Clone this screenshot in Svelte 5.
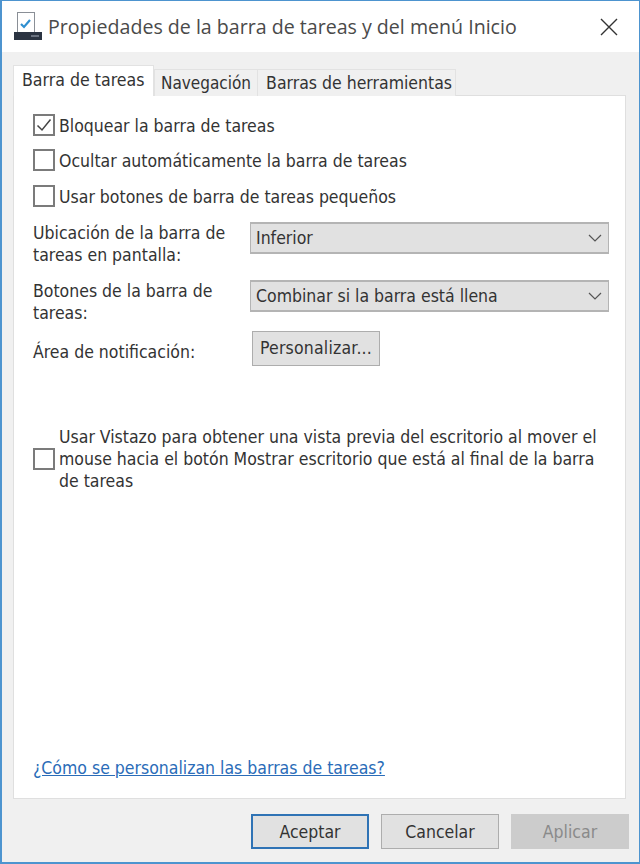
<script>
  const options = [
    { label: 'Bloquear la barra de tareas', checked: true },
    { label: 'Ocultar automáticamente la barra de tareas', checked: false },
    { label: 'Usar botones de barra de tareas pequeños', checked: false }
  ];
  const tabs = ['Navegación', 'Barras de herramientas'];
</script>

<div class="window">
  <header class="titlebar">
    <svg class="appicon" width="29" height="29" viewBox="0 0 29 29" aria-hidden="true">
      <rect x="3.5" y="0.5" width="17" height="21" fill="#fff" stroke="#8a8f96"/>
      <path d="M7 12l3 3 6-7" fill="none" stroke="#2f8fd0" stroke-width="2.2"/>
      <rect x="0" y="20" width="28" height="8" fill="#2b3442"/>
      <rect x="17" y="23" width="8" height="2" fill="#6a7280"/>
    </svg>
    <h1>Propiedades de la barra de tareas y del menú Inicio</h1>
    <svg class="close" width="18" height="18" viewBox="0 0 18 18" aria-hidden="true">
      <path d="M1 1l16 16M17 1L1 17" stroke="#333" stroke-width="1.4" fill="none"/>
    </svg>
  </header>

  <main class="body">
    <div class="tabs">
      <div class="tab active">Barra de tareas</div>
      {#each tabs as t}
        <div class="tab">{t}</div>
      {/each}
    </div>

    <section class="pane">
      <div class="checks">
        {#each options as o}
          <div class="check">
            <span class="box">
              {#if o.checked}
                <svg width="16" height="14" viewBox="0 0 16 14" aria-hidden="true"><path d="M1.5 7.5l4.5 4.5L14.5 1.5" fill="none" stroke="#444" stroke-width="1.5"/></svg>
              {/if}
            </span>
            <span class="text">{o.label}</span>
          </div>
        {/each}
      </div>

      <div class="form">
        <div class="label">Ubicación de la barra de tareas en pantalla:</div>
        <div class="select">
          <span>Inferior</span>
          <svg width="14" height="8" viewBox="0 0 14 8" aria-hidden="true"><path d="M1 1l6 6 6-6" fill="none" stroke="#555" stroke-width="1.2"/></svg>
        </div>
        <div class="label">Botones de la barra de tareas:</div>
        <div class="select">
          <span>Combinar si la barra está llena</span>
          <svg width="14" height="8" viewBox="0 0 14 8" aria-hidden="true"><path d="M1 1l6 6 6-6" fill="none" stroke="#555" stroke-width="1.2"/></svg>
        </div>
        <div class="label single">Área de notificación:</div>
        <div class="custom">Personalizar...</div>
      </div>

      <div class="peek">
        <span class="box"></span>
        <p>Usar Vistazo para obtener una vista previa del escritorio al mover el mouse hacia el botón Mostrar escritorio que está al final de la barra de tareas</p>
      </div>

      <a class="link" href="#help">¿Cómo se personalizan las barras de tareas?</a>
    </section>

    <footer class="actions">
      <button class="btn default">Aceptar</button>
      <button class="btn">Cancelar</button>
      <button class="btn disabled">Aplicar</button>
    </footer>
  </main>
</div>

<style>
  :global(body) { margin: 0; background: #f0f0f0; }
  .window {
    width: 640px;
    height: 864px;
    box-sizing: border-box;
    border: 2px solid #4d94cf;
    border-top-width: 1px;
    border-right-width: 1px;
    display: flex;
    flex-direction: column;
    font-family: "DejaVu Sans Condensed", "DejaVu Sans", sans-serif;
    font-size: 17.5px;
    color: #333;
  }
  .titlebar {
    height: 51px;
    flex: none;
    background: #fff;
    display: flex;
    align-items: center;
    padding: 0 21px 0 12px;
    box-sizing: border-box;
  }
  .appicon { flex: none; margin-right: 5px; margin-top: -1px; }
  h1 {
    margin: 0;
    flex: 1;
    font: 400 19.6px "Open Sans", "Noto Sans", sans-serif;
    color: #4a4a4a;
    white-space: nowrap;
  }
  .close { flex: none; }
  .body {
    flex: 1;
    background: #f0f0f0;
    display: flex;
    flex-direction: column;
    padding: 13px 13px 13px 11px;
    min-height: 0;
  }
  .tabs { display: flex; align-items: flex-end; height: 31px; flex: none; position: relative; z-index: 1; margin-bottom: -1px; }
  .tab {
    height: 26px;
    line-height: 26px;
    padding: 0 6px 0 6px;
    background: #f0f0f0;
    border: 1px solid #e2e2e2;
    border-bottom: 0;
    white-space: nowrap;
    font-size: 17px;
  }
  .tab:nth-child(3) { margin-left: -1px; padding: 0 3px 0 8px; font-size: 17.5px; }
  .tab.active {
    height: 31px;
    line-height: 28px;
    background: #fff;
    padding: 0 8px;
    width: 141px;
    box-sizing: border-box;
    font-size: 17.6px;
  }
  .pane {
    flex: 1;
    background: #fff;
    border: 1px solid #dfdfdf;
    box-sizing: border-box;
    padding: 18px 16px 19px 19px;
    display: flex;
    flex-direction: column;
  }
  .checks { display: flex; flex-direction: column; gap: 13.4px; }
  .check { display: flex; align-items: center; gap: 4px; height: 22px; }
  .text { padding-top: 2px; }
  .box {
    width: 22px;
    height: 22px;
    box-sizing: border-box;
    border: 2px solid #7b7b7b;
    background: #fff;
    display: flex;
    align-items: center;
    justify-content: center;
    flex: none;
  }
  .form {
    display: grid;
    grid-template-columns: 217px 1fr;
    margin-top: 15px;
    align-items: start;
  }
  .label { line-height: 22px; width: 205px; height: 44px; margin-bottom: 14px; }
  .label.single { height: 22px; margin: 3px 0 0; }
  .select {
    height: 32px;
    box-sizing: border-box;
    background: #e1e1e1;
    border: 2px solid #b4b4b4;
    border-right-width: 1px;
    border-left-width: 1px;
    display: flex;
    align-items: center;
    justify-content: space-between;
    padding: 1px 6px 0 5px;
  }
  .custom {
    justify-self: start;
    width: 128px;
    height: 35px;
    margin-top: -7px;
    margin-left: 2px;
    box-sizing: border-box;
    background: #e1e1e1;
    border: 1px solid #adadad;
    display: flex;
    align-items: center;
    justify-content: center;
    letter-spacing: 0.2px;
  }
  .peek { display: flex; align-items: center; gap: 4px; margin-top: 60px; }
  .peek p { margin: 0; line-height: 22px; width: 545px; }
  .link {
    margin-top: auto;
    color: #2a6cb8;
    text-decoration: underline;
    line-height: 22px;
  }
  .actions {
    height: 50px;
    flex: none;
    display: flex;
    justify-content: flex-end;
    align-items: flex-end;
    gap: 12px;
    margin-right: -3px;
  }
  .btn {
    width: 118px;
    height: 35px;
    font: inherit;
    color: #333;
    background: #e1e1e1;
    border: 1px solid #adadad;
    padding: 1px 0 0;
  }
  .btn.default { border: 2px solid #2f73b5; }
  .btn.disabled { background: #ccc; border-color: #ccc; color: #8a8a8a; }
</style>
